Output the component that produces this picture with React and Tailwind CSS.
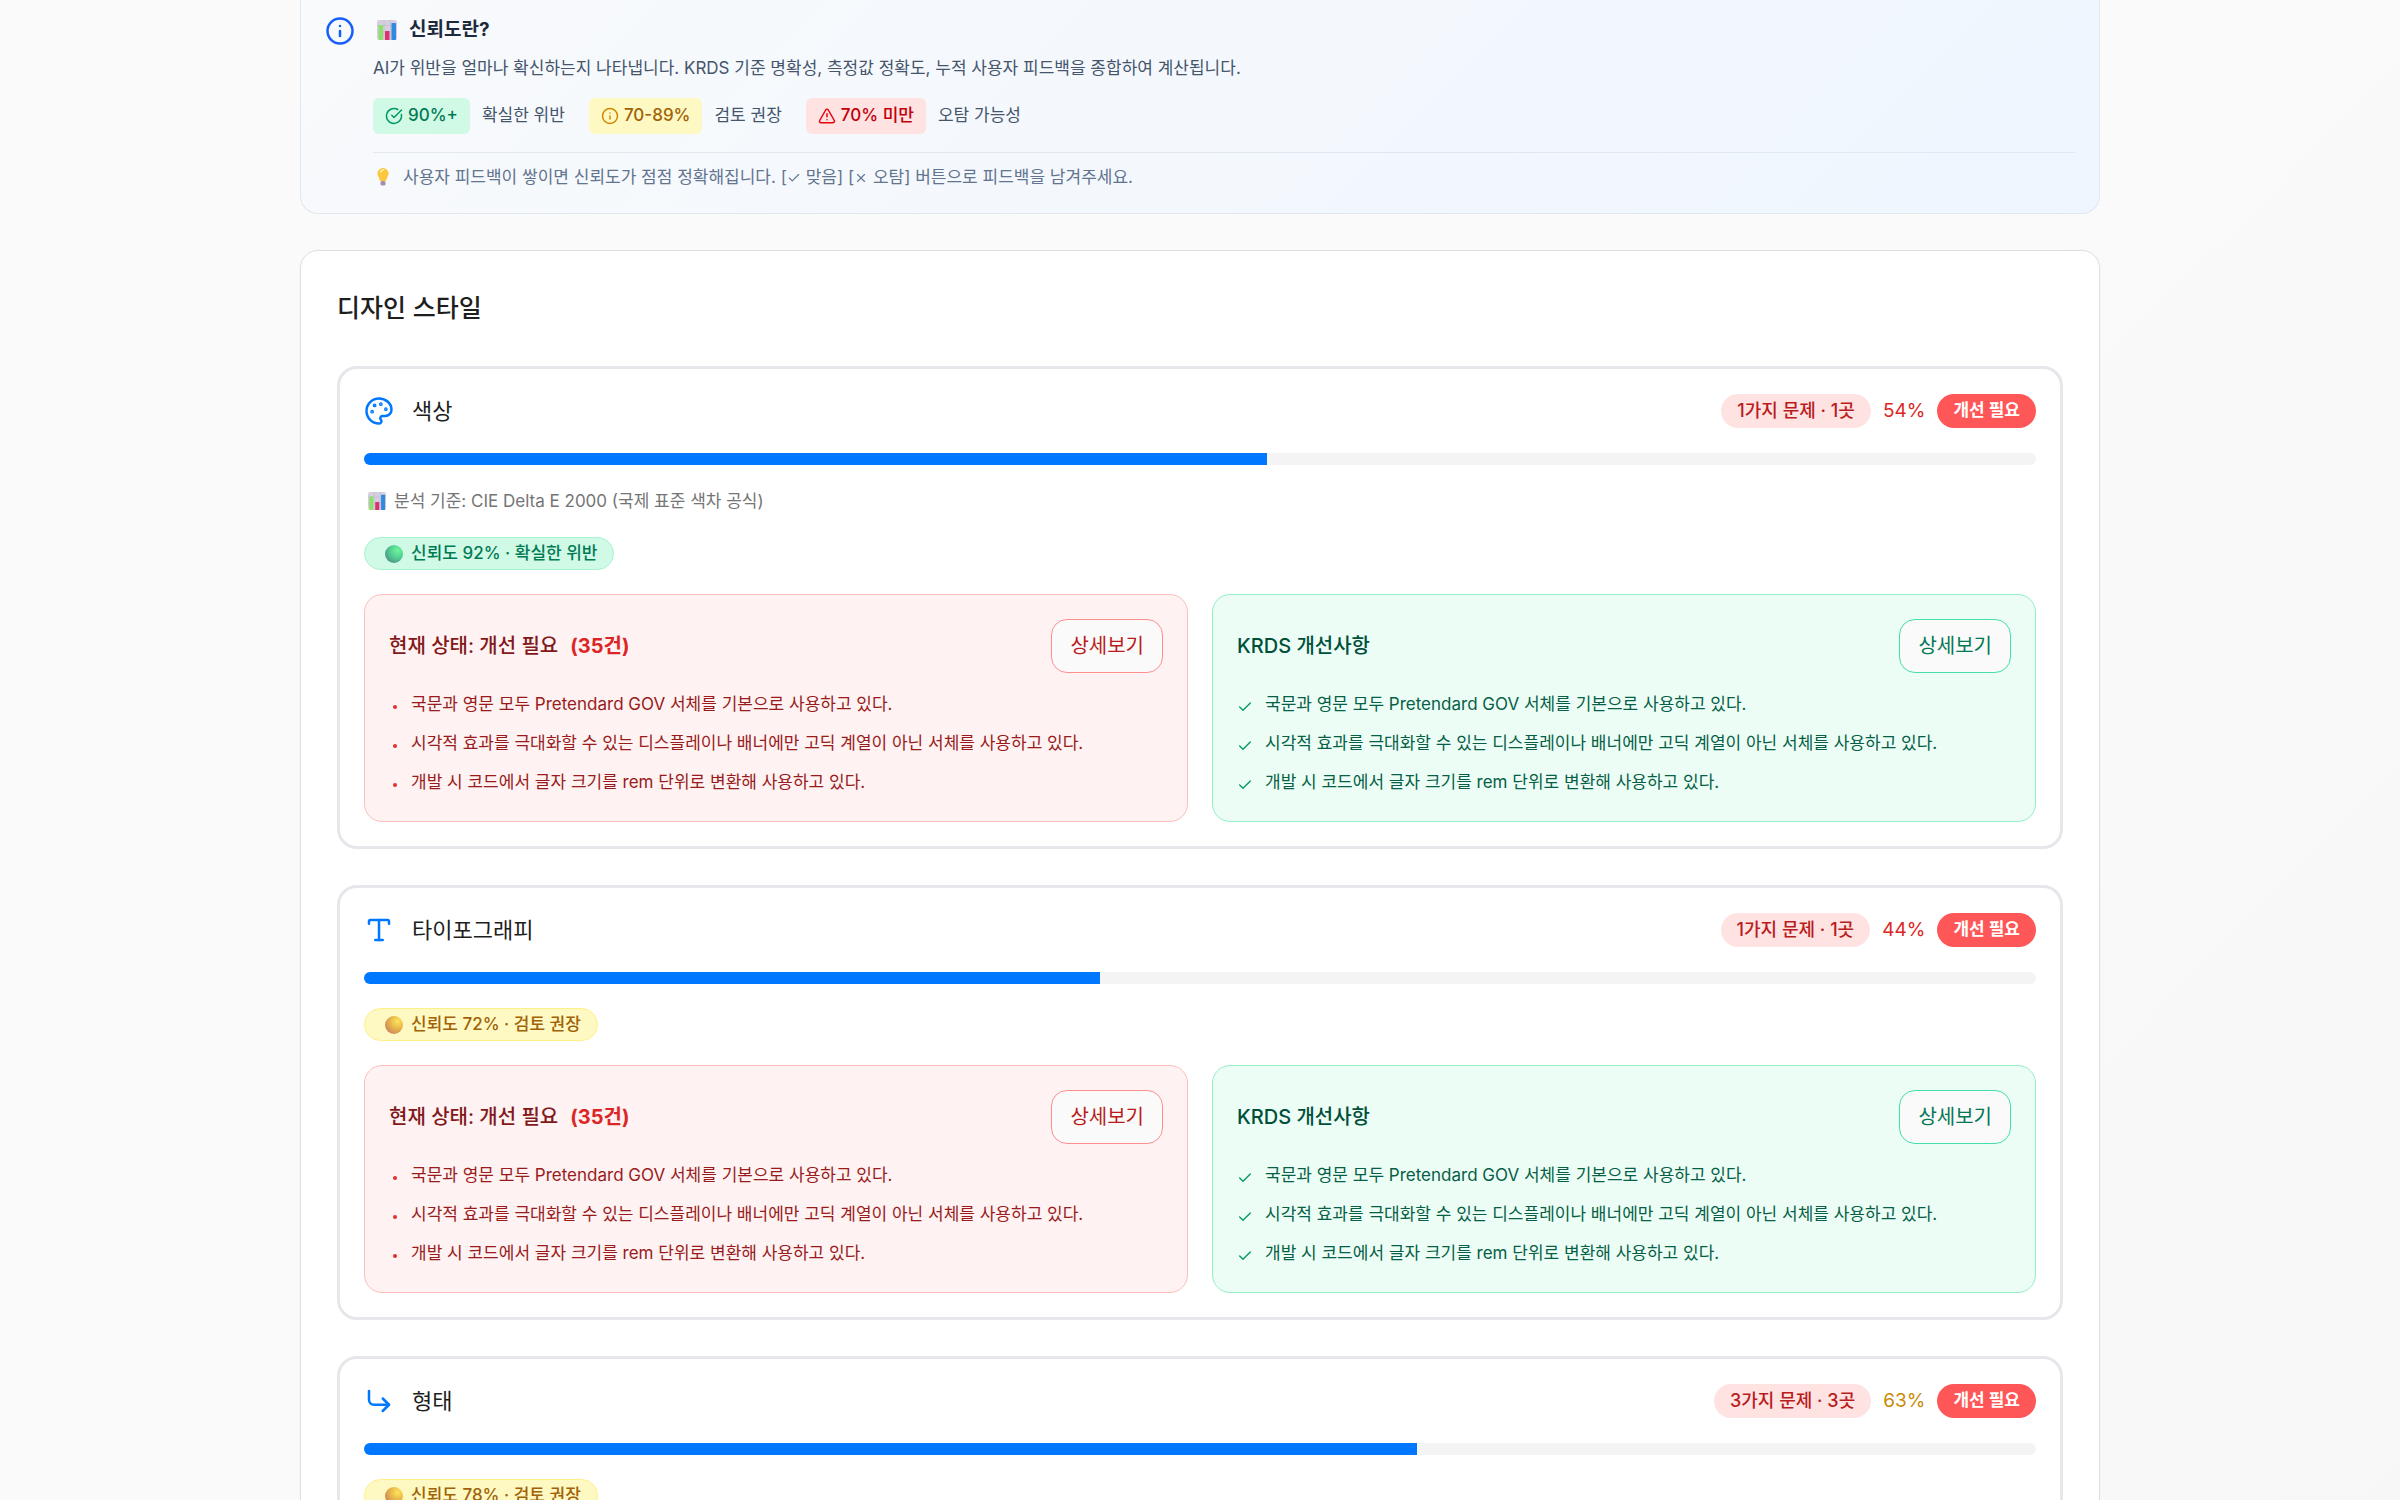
import React from 'react';
import { Info, CircleCheckBig, TriangleAlert, Palette, Type, CornerDownRight, Check, X } from 'lucide-react';

const categories = [
  {
    name: '색상',
    icon: Palette,
    issues: '1가지 문제 · 1곳',
    score: 54,
    scoreClass: 'text-[#dc2626]',
    basis: '분석 기준: CIE Delta E 2000 (국제 표준 색차 공식)',
    confidence: 92
  },
  {
    name: '타이포그래피',
    icon: Type,
    issues: '1가지 문제 · 1곳',
    score: 44,
    scoreClass: 'text-[#dc2626]',
    confidence: 72
  },
  {
    name: '형태',
    icon: CornerDownRight,
    issues: '3가지 문제 · 3곳',
    score: 63,
    scoreClass: 'text-[#ca8a04]',
    confidence: 78
  }
];

const guidelines = [
  '국문과 영문 모두 Pretendard GOV 서체를 기본으로 사용하고 있다.',
  '시각적 효과를 극대화할 수 있는 디스플레이나 배너에만 고딕 계열이 아닌 서체를 사용하고 있다.',
  '개발 시 코드에서 글자 크기를 rem 단위로 변환해 사용하고 있다.'
];

function ChartEmoji({ size }) {
  return (
    <svg width={size} height={size} viewBox="0 0 20 20" className="shrink-0" aria-hidden="true">
      <rect x="0" y="0" width="20" height="20" rx="2.5" fill="#d5cfe0" />
      <path d="M0 5.5h20M0 12h20M7 0v20M13.5 0v20" stroke="#bfb8cc" strokeWidth="0.6" />
      <rect x="1.5" y="5" width="4.5" height="15" rx="0.6" fill="#8fe06a" />
      <rect x="8" y="11" width="4.5" height="9" rx="0.6" fill="#e0316f" />
      <rect x="14.5" y="3" width="4.5" height="17" rx="0.6" fill="#2f8ae0" />
    </svg>
  );
}

function BulbEmoji() {
  return (
    <svg width="12" height="18" viewBox="0 0 12 18" className="mx-1 shrink-0" aria-hidden="true">
      <path d="M6 0a5.6 5.6 0 0 0-5.6 5.6c0 2.6 1.9 3.9 2.6 7.4h6c.7-3.5 2.6-4.8 2.6-7.4A5.6 5.6 0 0 0 6 0z" fill="#fcc740" />
      <path d="M3.5 4a3 3 0 0 1 3-2" stroke="#fff0a8" strokeWidth="1.5" fill="none" strokeLinecap="round" />
      <rect x="3.5" y="13" width="5" height="4.5" rx="1.5" fill="#a88bb0" />
    </svg>
  );
}

function Ball({ green }) {
  const id = green ? 'ball-green' : 'ball-yellow';
  return (
    <svg width="18" height="18" viewBox="0 0 18 18" className="shrink-0" aria-hidden="true">
      <defs>
        <radialGradient id={id} cx="0.7" cy="0.3" r="0.75">
          <stop offset="0" stopColor={green ? '#6cf59a' : '#ffe45c'} />
          <stop offset="0.55" stopColor={green ? '#52cf91' : '#e6b64a'} />
          <stop offset="1" stopColor={green ? '#4f9a88' : '#cf8a5a'} />
        </radialGradient>
      </defs>
      <circle cx="9" cy="9" r="9" fill={`url(#${id})`} />
    </svg>
  );
}

function InfoBanner() {
  return (
    <section className="flex gap-[18px] rounded-b-[18px] border-x border-b border-slate-200 bg-linear-135 from-slate-50 to-blue-50 px-6 pt-4 pb-6">
      <Info size={30} className="shrink-0 text-blue-600" />
      <div className="flex-1">
        <h3 className="flex items-center gap-3 pl-1 text-[19px] leading-[27px] font-bold text-slate-800">
          <ChartEmoji size={20} />
          신뢰도란?
        </h3>
        <p className="mt-[13px] text-[17px] leading-6 text-slate-600">
          AI가 위반을 얼마나 확신하는지 나타냅니다. KRDS 기준 명확성, 측정값 정확도, 누적 사용자 피드백을 종합하여 계산됩니다.
        </p>
        <div className="mt-[18px] flex flex-wrap gap-6 text-[17px] text-slate-600">
          <div className="flex items-center gap-3">
            <span className="flex h-9 items-center gap-[5px] rounded-md bg-[#d0fae5] px-3 font-medium text-[#007a55]">
              <CircleCheckBig size={18} className="text-[#009966]" />
              90%+
            </span>
            <span>확실한 위반</span>
          </div>
          <div className="flex items-center gap-3">
            <span className="flex h-9 items-center gap-[5px] rounded-md bg-[#fef9c2] px-3 font-medium text-[#a16207]">
              <Info size={18} className="text-[#d08700]" />
              70-89%
            </span>
            <span>검토 권장</span>
          </div>
          <div className="flex items-center gap-3">
            <span className="flex h-9 items-center gap-[5px] rounded-md bg-[#ffe2e2] px-3 font-medium text-[#c10007]">
              <TriangleAlert size={18} className="text-[#e7000b]" />
              70% 미만
            </span>
            <span>오탐 가능성</span>
          </div>
        </div>
        <div className="mt-[18px] flex items-center gap-2.5 border-t border-slate-200 pt-3 text-[17px] leading-6 text-slate-500">
          <BulbEmoji />
          <p>
            사용자 피드백이 쌓이면 신뢰도가 점점 정확해집니다. [
            <Check size={14} className="inline" /> 맞음] [
            <X size={14} className="inline" /> 오탐] 버튼으로 피드백을 남겨주세요.
          </p>
        </div>
      </div>
    </section>
  );
}

function CurrentPanel() {
  return (
    <div className="rounded-[18px] border border-[#ffbcbc] bg-[#fef2f2] px-6 pt-6 pb-[25px]">
      <div className="flex items-center justify-between">
        <h4 className="flex gap-3 text-xl font-medium text-[#82181a]">
          현재 상태: 개선 필요
          <span className="font-bold text-[#dc2626]">(35건)</span>
        </h4>
        <button className="h-[54px] rounded-[16px] border border-[#ff8f8f] bg-[#fafafa] px-[18px] text-xl text-[#b91c1c]">
          상세보기
        </button>
      </div>
      <ul className="mt-[17px] flex flex-col gap-[11px] text-[17px] leading-7 text-[#991b1b]">
        {guidelines.map(text => (
          <li key={text} className="flex items-center gap-[14px]">
            <span className="mt-1.5 ml-1 h-1 w-1 shrink-0 rounded-full bg-[#e03131]" />
            {text}
          </li>
        ))}
      </ul>
    </div>
  );
}

function ImprovementPanel() {
  return (
    <div className="rounded-[18px] border border-[#94efc5] bg-[#ecfdf5] px-6 pt-6 pb-[25px]">
      <div className="flex items-center justify-between">
        <h4 className="text-xl font-medium text-[#004f3b]">KRDS 개선사항</h4>
        <button className="h-[54px] rounded-[16px] border border-[#45e0a8] bg-[#fafafa] px-[18px] text-xl text-[#047857]">
          상세보기
        </button>
      </div>
      <ul className="mt-[17px] flex flex-col gap-[11px] text-[17px] leading-7 text-[#065f46]">
        {guidelines.map(text => (
          <li key={text} className="flex items-center gap-3">
            <Check size={16} className="mt-1.5 shrink-0 text-[#059669]" />
            {text}
          </li>
        ))}
      </ul>
    </div>
  );
}

function CategoryCard({ name, icon: Icon, issues, score, scoreClass, basis, confidence }) {
  const certain = confidence >= 90;

  return (
    <article className="rounded-[20px] border-3 border-[#e5e7eb] p-6">
      {/* Header */}
      <div className="flex h-9 items-center justify-between">
        <div className="flex items-center gap-[18px]">
          <Icon size={30} className="text-[#0077ff]" />
          <h3 className="text-[22px] text-[#1e1e1e]">{name}</h3>
        </div>
        <div className="flex items-center gap-3">
          <span className="flex h-[34px] items-center rounded-full bg-[#ffe2e2] px-4 text-lg font-medium text-[#b91c1c]">
            {issues}
          </span>
          <span className={`text-[19px] ${scoreClass}`}>{score}%</span>
          <span className="flex h-[34px] items-center rounded-full bg-[#ff5757] px-4 text-[17px] font-bold text-white">
            개선 필요
          </span>
        </div>
      </div>

      {/* Score bar */}
      <div className="mt-6 h-3 overflow-hidden rounded-full bg-[#f4f4f4]">
        <div className="h-full bg-[#0077ff]" style={{ width: `${score}%` }} />
      </div>

      {basis && (
        <p className="mt-6 flex items-center gap-2 pl-1 text-[17px] leading-6 text-[#757575]">
          <ChartEmoji size={18} />
          {basis}
        </p>
      )}

      {/* Confidence badge */}
      <div
        className={
          certain
            ? 'mt-6 flex h-[33px] w-fit items-center gap-2 rounded-full border border-[#a4f4cf] bg-[#d0fae5] pr-4 pl-5 text-[17px] font-medium text-[#007a55]'
            : 'mt-6 flex h-[33px] w-fit items-center gap-2 rounded-full border border-[#fff085] bg-[#fef9c2] pr-4 pl-5 text-[17px] font-medium text-[#a16207]'
        }
      >
        <Ball green={certain} />
        {`신뢰도 ${confidence}% · ${certain ? '확실한 위반' : '검토 권장'}`}
      </div>

      <div className="mt-6 grid grid-cols-2 gap-6">
        <CurrentPanel />
        <ImprovementPanel />
      </div>
    </article>
  );
}

export default function App() {
  return (
    <div className="min-h-screen bg-linear-135 from-[#fafafa] from-50% to-[#f7f7f7] font-['Inter','Noto_Sans_CJK_KR',sans-serif]">
      <main className="mx-auto flex w-3/4 flex-col gap-9">
        <InfoBanner />
        <section className="rounded-[18px] border border-[#dfdfe1] bg-white p-9 shadow-xs">
          <h2 className="mb-9 text-[25px] leading-[43px] font-medium text-[#1e1e1e]">디자인 스타일</h2>
          <div className="flex flex-col gap-9">
            {categories.map(category => (
              <CategoryCard key={category.name} {...category} />
            ))}
          </div>
        </section>
      </main>
    </div>
  );
}
